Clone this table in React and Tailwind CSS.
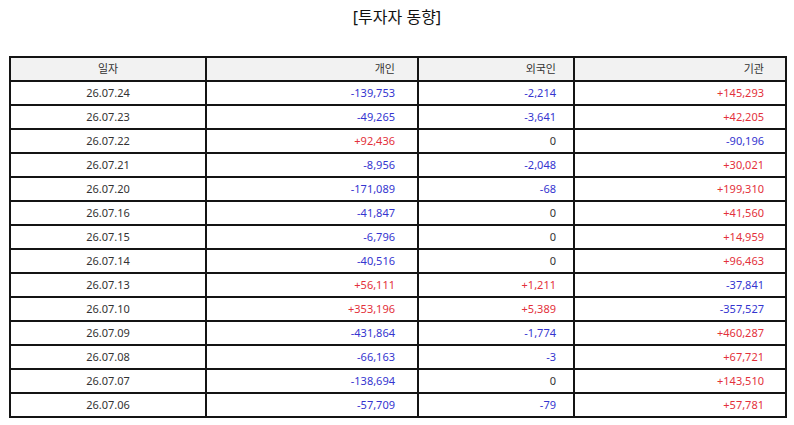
import React from "react";

const rows = [
  ["26.07.24", "-139,753", "-2,214", "+145,293"],
  ["26.07.23", "-49,265", "-3,641", "+42,205"],
  ["26.07.22", "+92,436", "0", "-90,196"],
  ["26.07.21", "-8,956", "-2,048", "+30,021"],
  ["26.07.20", "-171,089", "-68", "+199,310"],
  ["26.07.16", "-41,847", "0", "+41,560"],
  ["26.07.15", "-6,796", "0", "+14,959"],
  ["26.07.14", "-40,516", "0", "+96,463"],
  ["26.07.13", "+56,111", "+1,211", "-37,841"],
  ["26.07.10", "+353,196", "+5,389", "-357,527"],
  ["26.07.09", "-431,864", "-1,774", "+460,287"],
  ["26.07.08", "-66,163", "-3", "+67,721"],
  ["26.07.07", "-138,694", "0", "+143,510"],
  ["26.07.06", "-57,709", "-79", "+57,781"],
];

// sign decides the colour
const tone = (v) => {
  if (v.startsWith("+")) return "text-[#e3313b]";
  if (v.startsWith("-")) return "text-[#3535cf]";
  return "text-[#333333]";
};

const cell = "border-2 border-[#141414]";

const App = () => {
  return (
    <div
      className="w-[794px] h-[425px] bg-white"
      style={{ fontFamily: '"Noto Sans", "Noto Sans CJK KR", sans-serif' }}
    >
      {/* Title */}
      <h1 className="h-[36px] pt-[5px] text-center text-[16px] leading-[24px] text-[#111111]">
        [투자자 동향]
      </h1>

      {/* Table */}
      <div className="px-[9px] pt-[20px]">
        <table className="w-[776px] border-collapse table-fixed text-[11px] text-[#333333]">
          <colgroup>
            <col className="w-[196px]" />
            <col className="w-[212px]" />
            <col className="w-[156px]" />
            <col className="w-[212px]" />
          </colgroup>
          <thead>
            <tr className="h-[24px] bg-[#f2f2f2]">
              <th className={`${cell} font-normal text-center`}>일자</th>
              <th className={`${cell} font-normal text-right pr-[22px]`}>개인</th>
              <th className={`${cell} font-normal text-right pr-[17px]`}>외국인</th>
              <th className={`${cell} font-normal text-right pr-[21px]`}>기관</th>
            </tr>
          </thead>
          <tbody>
            {rows.map((r) => (
              <tr key={r[0]} className="h-[24px]">
                <td className={`${cell} text-center`}>{r[0]}</td>
                <td className={`${cell} text-right pr-[22px] ${tone(r[1])}`}>{r[1]}</td>
                <td className={`${cell} text-right pr-[17px] ${tone(r[2])}`}>{r[2]}</td>
                <td className={`${cell} text-right pr-[21px] ${tone(r[3])}`}>{r[3]}</td>
              </tr>
            ))}
          </tbody>
        </table>
      </div>
    </div>
  );
};

export default App;
